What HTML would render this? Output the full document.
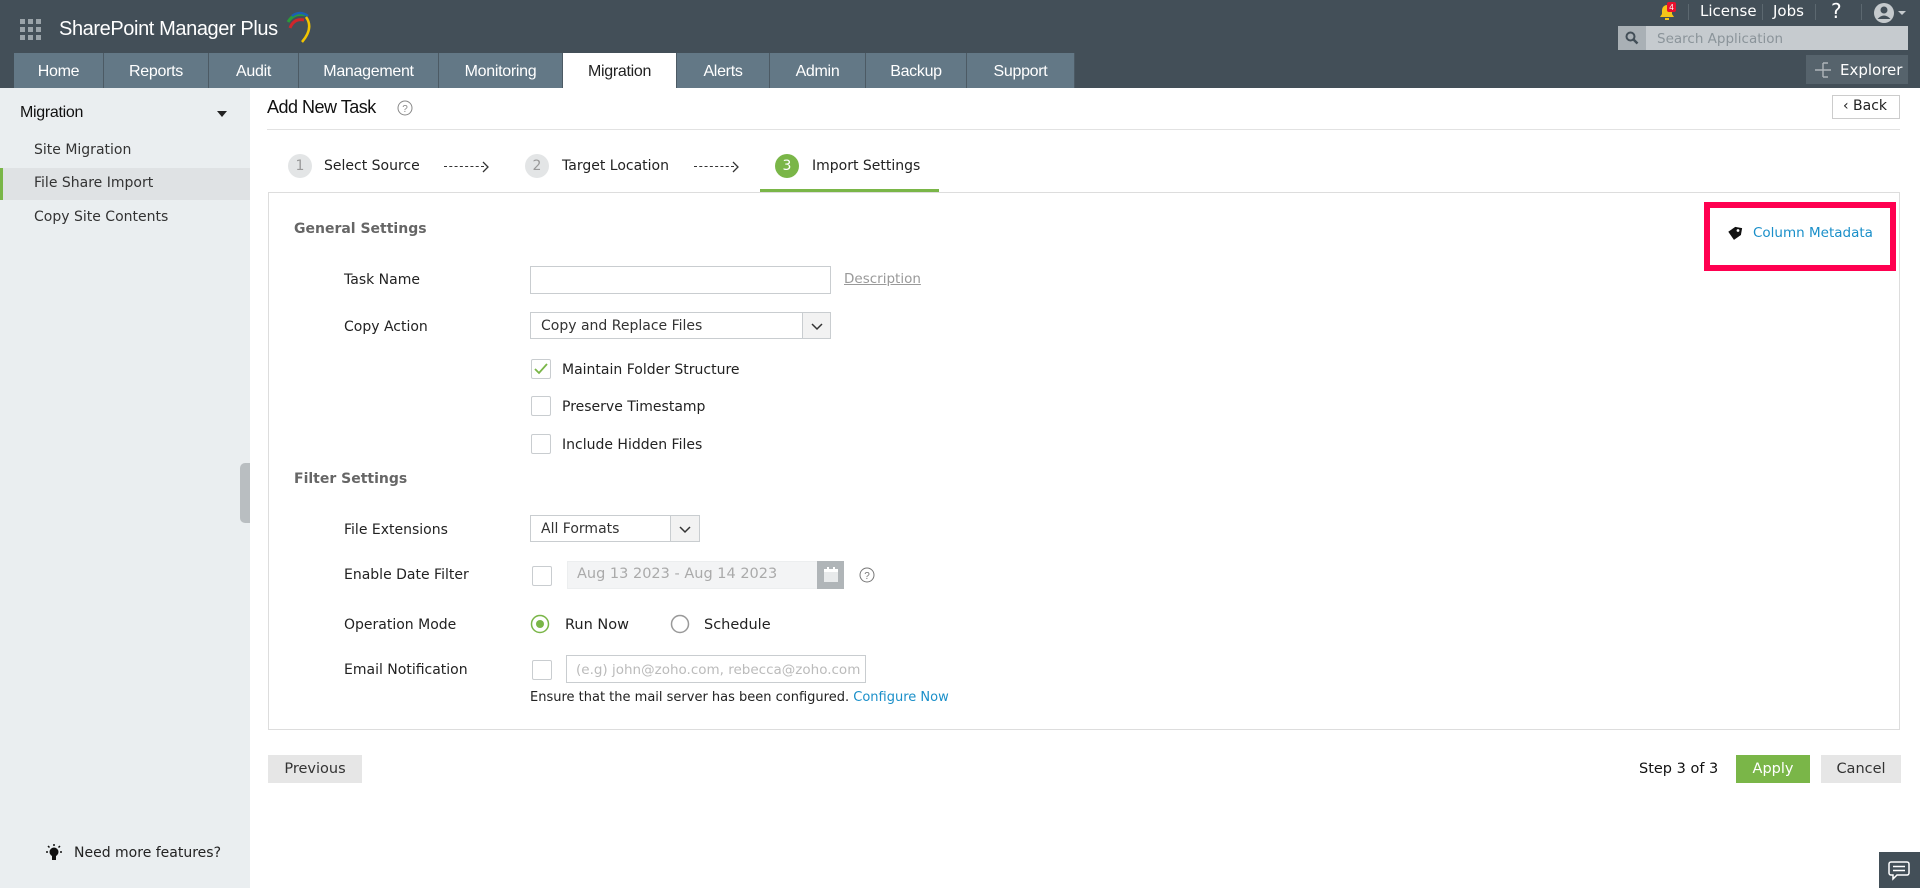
<!DOCTYPE html>
<html><head><meta charset="utf-8"><style>
*{box-sizing:border-box;margin:0;padding:0}
body{width:1920px;height:888px;position:relative;overflow:hidden;background:#fff;font-family:"DejaVu Sans","Liberation Sans",sans-serif;font-size:14px;color:#222}
.a{position:absolute;white-space:nowrap}
.hdr{left:0;top:0;width:1920px;height:88px;background:#434f58}
.tab{position:absolute;top:53px;height:35px;background:#637886;color:#fff;font-family:"Liberation Sans Narrow","Liberation Sans",sans-serif;font-size:16px;text-align:center;line-height:37px;border-right:1px solid #4c5a64;letter-spacing:-0.3px}
.tab.on{background:#fff;color:#222}
.side{left:0;top:88px;width:250px;height:800px;background:#eaeef0}
.lbl{left:344px;font-size:14px;color:#222}
.cb{position:absolute;width:20px;height:20px;border:1px solid #c9cdd0;background:#fff;border-radius:2px}
.inp{position:absolute;border:1px solid #c9cdd0;background:#fff}
.sel{position:absolute;border:1px solid #c9cdd0;background:#fff;font-size:14px;line-height:26px;padding-left:10px;color:#333}
.sel .ar{position:absolute;right:0;top:0;bottom:0;border-left:1px solid #c9cdd0;background:#f2f2f2}
.circ{position:absolute;width:24px;height:24px;border-radius:50%;background:#e3e5e6;color:#999;text-align:center;line-height:24px;font-size:14px}
.dash{position:absolute;top:166px;width:40px;height:0;border-top:1.5px dashed #333}
</style></head><body>
<div class="a hdr"></div>
<svg class="a" style="left:20px;top:19px" width="21" height="21"><g fill="#9aa3a9"><rect x="0" y="0" width="5" height="5"/><rect x="8" y="0" width="5" height="5"/><rect x="16" y="0" width="5" height="5"/><rect x="0" y="8" width="5" height="5"/><rect x="8" y="8" width="5" height="5"/><rect x="16" y="8" width="5" height="5"/><rect x="0" y="16" width="5" height="5"/><rect x="8" y="16" width="5" height="5"/><rect x="16" y="16" width="5" height="5"/></g></svg>
<div class="a" style="left:59px;top:18px;color:#fff;font-family:'Liberation Sans Narrow','Liberation Sans',sans-serif;font-size:20px;letter-spacing:-0.4px">SharePoint Manager Plus</div>
<svg class="a" style="left:282px;top:8px" width="30" height="36"><path d="M8 20 Q12 10 22 12" stroke="#d0262b" stroke-width="3" fill="none"/><path d="M6 14 Q12 4 24 7" stroke="#2a9a3a" stroke-width="3" fill="none"/><path d="M10 8 Q18 2 26 8" stroke="#1a5fb4" stroke-width="2.5" fill="none"/><path d="M24 9 Q32 20 20 34" stroke="#f2c500" stroke-width="2.5" fill="none"/></svg>
<div class="tab" style="left:14px;width:90px">Home</div>
<div class="tab" style="left:104px;width:105px">Reports</div>
<div class="tab" style="left:209px;width:90px">Audit</div>
<div class="tab" style="left:299px;width:140px">Management</div>
<div class="tab" style="left:439px;width:124px">Monitoring</div>
<div class="tab on" style="left:563px;width:114px">Migration</div>
<div class="tab" style="left:677px;width:93px">Alerts</div>
<div class="tab" style="left:770px;width:96px">Admin</div>
<div class="tab" style="left:866px;width:101px">Backup</div>
<div class="tab" style="left:967px;width:108px">Support</div>
<svg class="a" style="left:1657px;top:2px" width="20" height="20"><path d="M3 15 L5 12 V8 A5 5 0 0 1 15 8 V12 L17 15 Z" fill="#f5c518"/><rect x="8" y="16" width="4" height="2" fill="#f5c518"/><rect x="10" y="0" width="9" height="10" rx="2" fill="#e8112d"/><text x="14.5" y="8" font-size="8" fill="#fff" text-anchor="middle" font-family="Liberation Sans">4</text></svg>
<div class="a" style="left:1688px;top:4px;width:1px;height:16px;background:#5c6870"></div>
<div class="a" style="left:1700px;top:2px;color:#fff;font-size:15px">License</div>
<div class="a" style="left:1762px;top:4px;width:1px;height:16px;background:#5c6870"></div>
<div class="a" style="left:1773px;top:2px;color:#fff;font-size:15px">Jobs</div>
<div class="a" style="left:1815px;top:4px;width:1px;height:16px;background:#5c6870"></div>
<div class="a" style="left:1831px;top:-1px;color:#fff;font-size:20px">?</div>
<div class="a" style="left:1861px;top:4px;width:1px;height:16px;background:#5c6870"></div>
<svg class="a" style="left:1873px;top:2px" width="44" height="22"><circle cx="11" cy="11" r="10" fill="#c5cacd"/><circle cx="11" cy="8" r="3.5" fill="#434f58"/><path d="M4.5 17 Q11 10 17.5 17" fill="#434f58"/><path d="M25 9 L33 9 L29 13 Z" fill="#c5cacd"/></svg>
<div class="a" style="left:1618px;top:26px;width:290px;height:24px;background:#c6cbcf"></div>
<div class="a" style="left:1618px;top:26px;width:28px;height:24px;background:#a9b0b5"></div>
<svg class="a" style="left:1625px;top:31px" width="14" height="14"><circle cx="5.5" cy="5.5" r="4" stroke="#434f58" stroke-width="2" fill="none"/><path d="M8.5 8.5 L12.5 12.5" stroke="#434f58" stroke-width="2.5"/></svg>
<div class="a" style="left:1657px;top:31px;color:#8b949a;font-size:13.5px">Search Application</div>
<div class="a" style="left:1806px;top:55px;width:102px;height:29px;background:#56636c"></div>
<svg class="a" style="left:1813px;top:60px" width="20" height="20"><path d="M2 10 H18 M10 3 V17 M10 3 H15 M10 17 H15 M10 10 H15" stroke="#aeb5ba" stroke-width="1.4" fill="none"/></svg>
<div class="a" style="left:1840px;top:61px;color:#fff;font-size:15px">Explorer</div>

<div class="a side"></div>
<div class="a" style="left:20px;top:104px;font-family:'Liberation Sans Narrow','Liberation Sans',sans-serif;font-size:16px;color:#111;letter-spacing:-0.3px">Migration</div>
<svg class="a" style="left:217px;top:111px" width="10" height="6"><path d="M0 0 H10 L5 6 Z" fill="#222"/></svg>
<div class="a" style="left:34px;top:142px;font-size:14px;color:#333">Site Migration</div>
<div class="a" style="left:0;top:168px;width:250px;height:32px;background:#dfe2e4"></div>
<div class="a" style="left:0;top:168px;width:3px;height:32px;background:#7ab648"></div>
<div class="a" style="left:34px;top:175px;font-size:14px;color:#333">File Share Import</div>
<div class="a" style="left:34px;top:209px;font-size:14px;color:#333">Copy Site Contents</div>
<div class="a" style="left:240px;top:463px;width:10px;height:60px;background:#b9bec1;border-radius:5px 0 0 5px"></div>
<svg class="a" style="left:45px;top:844px" width="18" height="18"><circle cx="9" cy="8" r="4.5" fill="#111"/><rect x="7" y="12" width="4" height="4" fill="#111"/><path d="M9 0V2 M1 8H3 M15 8H17 M3 2L4.5 3.5 M15 2L13.5 3.5" stroke="#111" stroke-width="1.5"/></svg>
<div class="a" style="left:74px;top:845px;font-size:14px;color:#222">Need more features?</div>

<div class="a" style="left:267px;top:97px;font-family:'Liberation Sans Narrow','Liberation Sans',sans-serif;font-size:18px;color:#111;letter-spacing:-0.5px">Add New Task</div>
<svg class="a" style="left:397px;top:100px" width="16" height="16"><circle cx="8" cy="8" r="7" stroke="#888" fill="none"/><text x="8" y="12" font-size="10" fill="#888" text-anchor="middle" font-family="Liberation Sans">?</text></svg>
<div class="a" style="left:267px;top:129px;width:1633px;height:1px;background:#e2e2e2"></div>
<div class="a" style="left:1832px;top:95px;width:68px;height:24px;border:1px solid #ccc;background:#fff"></div>
<div class="a" style="left:1843px;top:98px;font-size:14px;color:#222">&#8249; Back</div>

<div class="circ" style="left:288px;top:154px">1</div>
<div class="a" style="left:324px;top:158px;font-size:14px">Select Source</div>
<div class="dash" style="left:444px"></div><svg class="a" style="left:482px;top:161px" width="8" height="12"><path d="M1 1 L6 6 L1 11" stroke="#333" stroke-width="1.3" fill="none"/></svg>
<div class="circ" style="left:525px;top:154px">2</div>
<div class="a" style="left:562px;top:158px;font-size:14px">Target Location</div>
<div class="dash" style="left:694px"></div><svg class="a" style="left:732px;top:161px" width="8" height="12"><path d="M1 1 L6 6 L1 11" stroke="#333" stroke-width="1.3" fill="none"/></svg>
<div class="circ" style="left:775px;top:154px;background:#7ab648;color:#fff">3</div>
<div class="a" style="left:812px;top:158px;font-size:14px">Import Settings</div>
<div class="a" style="left:760px;top:189px;width:179px;height:3px;background:#7ab648"></div>

<div class="a" style="left:268px;top:192px;width:1632px;height:538px;border:1px solid #ddd"></div>
<div class="a" style="left:294px;top:221px;font-size:14px;font-weight:bold;color:#666">General Settings</div>
<div class="a" style="left:1704px;top:202px;width:192px;height:69px;border:6px solid #ff0050"></div>
<svg class="a" style="left:1727px;top:226px" width="16" height="16"><path d="M1 7 L7 1 H14 V8 L8 14 Z" fill="#111" transform="rotate(10 8 8)"/><circle cx="11" cy="4.5" r="1.4" fill="#fff"/></svg>
<div class="a" style="left:1753px;top:225px;font-size:13.5px;color:#1a8fc9">Column Metadata</div>

<div class="a lbl" style="top:272px">Task Name</div>
<div class="inp" style="left:530px;top:266px;width:301px;height:28px"></div>
<div class="a" style="left:844px;top:271px;font-size:13.5px;color:#999;text-decoration:underline">Description</div>
<div class="a lbl" style="top:319px">Copy Action</div>
<div class="sel" style="left:530px;top:312px;width:301px;height:27px;line-height:27px">Copy and Replace Files<div class="ar" style="width:28px"><svg width="28" height="26"><path d="M9 11 L14 16 L19 11" stroke="#333" stroke-width="1.5" fill="none"/></svg></div></div>
<div class="cb" style="left:531px;top:359px"><svg width="18" height="18"><path d="M3 9 L7 13 L15 4" stroke="#7ab648" stroke-width="1.8" fill="none"/></svg></div>
<div class="a" style="left:562px;top:362px;font-size:14px">Maintain Folder Structure</div>
<div class="cb" style="left:531px;top:396px"></div>
<div class="a" style="left:562px;top:399px;font-size:14px">Preserve Timestamp</div>
<div class="cb" style="left:531px;top:434px"></div>
<div class="a" style="left:562px;top:437px;font-size:14px">Include Hidden Files</div>
<div class="a" style="left:294px;top:471px;font-size:14px;font-weight:bold;color:#666">Filter Settings</div>

<div class="a lbl" style="top:522px">File Extensions</div>
<div class="sel" style="left:530px;top:515px;width:170px;height:27px;line-height:27px">All Formats<div class="ar" style="width:29px"><svg width="28" height="26"><path d="M9 11 L14 16 L19 11" stroke="#333" stroke-width="1.5" fill="none"/></svg></div></div>
<div class="a lbl" style="top:567px">Enable Date Filter</div>
<div class="cb" style="left:532px;top:566px"></div>
<div class="a" style="left:567px;top:561px;width:277px;height:28px;background:#f3f4f5;border:1px solid #eceeef"></div>
<div class="a" style="left:577px;top:566px;font-size:14.5px;color:#aaa">Aug 13 2023 - Aug 14 2023</div>
<div class="a" style="left:817px;top:561px;width:27px;height:28px;background:#b0b5b8"></div>
<svg class="a" style="left:823px;top:566px" width="16" height="17"><rect x="1" y="3" width="14" height="13" fill="#e8eaeb"/><rect x="1" y="3" width="14" height="3" fill="#fff"/><rect x="4" y="1" width="2" height="4" fill="#fff"/><rect x="10" y="1" width="2" height="4" fill="#fff"/></svg>
<svg class="a" style="left:859px;top:567px" width="16" height="16"><circle cx="8" cy="8" r="7" stroke="#777" fill="none"/><text x="8" y="12" font-size="10" fill="#777" text-anchor="middle" font-family="Liberation Sans">?</text></svg>
<div class="a lbl" style="top:617px">Operation Mode</div>
<svg class="a" style="left:530px;top:614px" width="20" height="20"><circle cx="10" cy="10" r="8.5" stroke="#7ab648" stroke-width="1.5" fill="#fff"/><circle cx="10" cy="10" r="4" fill="#7ab648"/></svg>
<div class="a" style="left:565px;top:617px;font-size:14.5px">Run Now</div>
<svg class="a" style="left:670px;top:614px" width="20" height="20"><circle cx="10" cy="10" r="8.5" stroke="#999" stroke-width="1.5" fill="#fff"/></svg>
<div class="a" style="left:704px;top:617px;font-size:14.5px">Schedule</div>
<div class="a lbl" style="top:662px">Email Notification</div>
<div class="cb" style="left:532px;top:660px"></div>
<div class="inp" style="left:566px;top:655px;width:300px;height:28px;overflow:hidden"><div class="a" style="left:9px;top:6px;font-size:13.5px;color:#bbb">(e.g) john@zoho.com, rebecca@zoho.com</div></div>
<div class="a" style="left:530px;top:690px;font-size:13px;color:#222">Ensure that the mail server has been configured. <span style="color:#1a8fc9">Configure Now</span></div>

<div class="a" style="left:268px;top:755px;width:94px;height:28px;background:#e6e6e6;color:#333;font-size:14.5px;text-align:center;line-height:29px">Previous</div>
<div class="a" style="left:1639px;top:761px;font-size:14.5px;color:#111">Step 3 of 3</div>
<div class="a" style="left:1736px;top:755px;width:74px;height:28px;background:#7ab648;color:#fff;font-size:14.5px;text-align:center;line-height:29px">Apply</div>
<div class="a" style="left:1821px;top:755px;width:80px;height:28px;background:#e6e6e6;color:#333;font-size:14.5px;text-align:center;line-height:29px">Cancel</div>
<div class="a" style="left:1879px;top:852px;width:41px;height:36px;background:#434f58"></div>
<svg class="a" style="left:1888px;top:860px" width="22" height="22"><path d="M3 2 H19 A2 2 0 0 1 21 4 V13 A2 2 0 0 1 19 15 H9 L5 19 V15 H3 A2 2 0 0 1 1 13 V4 A2 2 0 0 1 3 2 Z" stroke="#fff" stroke-width="1.5" fill="none"/><path d="M5 6.5H17 M5 10.5H17" stroke="#fff" stroke-width="1.5"/></svg>
</body></html>
